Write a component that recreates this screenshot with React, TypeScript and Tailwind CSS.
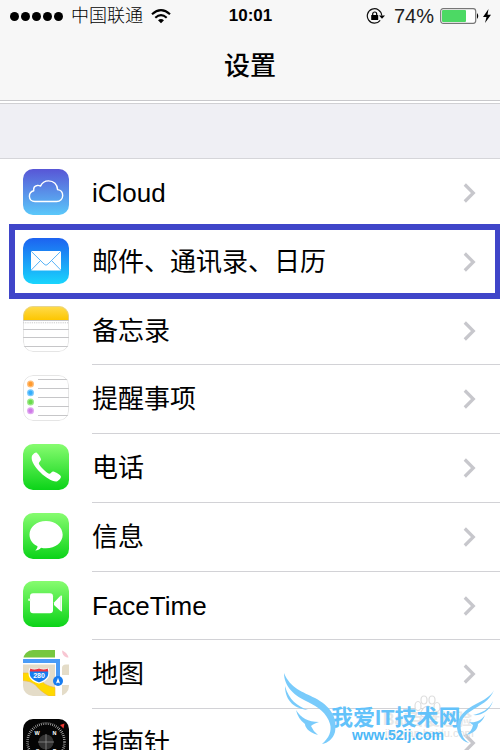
import type { ReactNode } from "react";

function Gradient({ id, from, to }: { id: string; from: string; to: string }) {
  return (
    <defs>
      <linearGradient id={id} x1="0" y1="0" x2="0" y2="1">
        <stop offset="0" stopColor={from} />
        <stop offset="1" stopColor={to} />
      </linearGradient>
    </defs>
  );
}

function Tile({ children }: { children: ReactNode }) {
  return (
    <svg viewBox="0 0 46 46" aria-hidden="true" className="mb-1 size-[46px] shrink-0 overflow-hidden rounded-[10px]">
      {children}
    </svg>
  );
}

function CloudIcon() {
  return (
    <Tile>
      <Gradient id="cloud" from="#5856d6" to="#5ac8fa" />
      <rect width="46" height="46" fill="url(#cloud)" />
      <path
        d="M12 32.500C8.500 32.500 6.400 30 6.400 27.200C6.400 24.400 8.200 22.300 10.700 21.700C10.400 18.700 12.200 16.800 14.200 16.500C15.600 16.200 16.700 16.700 17.500 17.100C19 13.700 22 11.900 25.600 11.900C30.700 11.900 34.300 15.500 34.600 20.600C37.700 21 39.700 23.500 39.700 26.500C39.700 29.900 37.200 32.500 33.700 32.500Z"
        fill="none"
        stroke="#fff"
        strokeWidth="1.400"
        strokeLinejoin="round"
      />
    </Tile>
  );
}

function MailIcon() {
  return (
    <Tile>
      <Gradient id="mail" from="#1d62f0" to="#19d5fd" />
      <rect width="46" height="46" fill="url(#mail)" />
      <rect x="8" y="13" width="30" height="19.500" rx="1" fill="#fff" />
      <path d="M8.300 13.400L21 26Q23 28.500 25 26L37.700 13.400M8.300 32L17.500 22.500M37.700 32L28.500 22.500" fill="none" stroke="#5ab4f7" strokeWidth="1" />
    </Tile>
  );
}

function NotesIcon() {
  return (
    <Tile>
      <Gradient id="notes" from="#ffdc4d" to="#fdc600" />
      <rect width="46" height="46" fill="#fff" />
      <rect width="46" height="14" fill="url(#notes)" />
      <path d="M0 14.500H46M0 23.500H46M0 31.500H46M0 40.500H46" stroke="#c6c6c8" strokeWidth="1" />
      <path d="M0 16.800H46" stroke="#c8c8c8" strokeWidth="1" strokeDasharray="1.200 1" />
      <rect x=".5" y=".5" width="45" height="45" rx="9.500" fill="none" stroke="#cfcfcf" strokeOpacity=".55" />
    </Tile>
  );
}

function RemindersIcon() {
  return (
    <Tile>
      <rect width="46" height="46" fill="#fff" />
      <path d="M15 4.500H46M15 13.500H46M15 22.500H46M15 31.500H46M15 40.500H46" stroke="#c6c6c8" strokeWidth="1" />
      {[
        [9, "#ff9a2e"],
        [17.700, "#35aefc"],
        [27, "#69dc4b"],
        [35.700, "#cf7be8"],
      ].map(([y, color]) => (
        <g key={y} fill={color as string}>
          <circle cx="7.500" cy={y} r="3.500" fillOpacity=".65" />
          <circle cx="7.500" cy={y} r="2.200" />
        </g>
      ))}
      <rect x=".5" y=".5" width="45" height="45" rx="9.500" fill="none" stroke="#cfcfcf" strokeOpacity=".55" />
    </Tile>
  );
}

function PhoneIcon() {
  return (
    <Tile>
      <Gradient id="phone" from="#87fc70" to="#0bd318" />
      <rect width="46" height="46" fill="url(#phone)" />
      <path
        d="M9.300 11.200C10.500 9.500 12 8.400 13.200 8.400C14.500 8.600 17.700 13.500 18 15.200C18.200 16.800 16 17.700 15.800 19.200C15.700 21.500 24.300 29.800 26.700 29.700C28.200 29.500 28.500 27.500 30.300 27.600C32.300 27.800 37.500 31 37.900 32.500C38.100 34.100 35.500 37 33.500 37.400C25.500 38 8 22 8.700 13.500C8.700 12.700 8.900 11.900 9.300 11.200Z"
        fill="#fff"
      />
    </Tile>
  );
}

function MessagesIcon() {
  return (
    <Tile>
      <Gradient id="messages" from="#87fc70" to="#0bd318" />
      <rect width="46" height="46" fill="url(#messages)" />
      <path
        d="M23 8C32.300 8 39.700 14 39.700 21.700C39.700 29.400 32.300 35.300 23 35.300C21.200 35.300 19.500 35.100 18 34.700C16.500 36.500 14.300 37.600 12.300 37.500C13.600 36.500 14.500 34.800 14.500 33.300C9.600 30.900 6.500 26.600 6.500 21.700C6.500 14 13.700 8 23 8Z"
        fill="#fff"
      />
    </Tile>
  );
}

function FaceTimeIcon() {
  return (
    <Tile>
      <Gradient id="facetime" from="#87fc70" to="#0bd318" />
      <rect width="46" height="46" fill="url(#facetime)" />
      <rect x="7" y="12.300" width="23" height="20" rx="3" fill="#fff" />
      <circle cx="6.300" cy="18.700" r="1.300" fill="#d6ffd0" />
      <path d="M31 21.500L37.500 14.800Q39 14 39 15.500V29.500Q39 31 37.500 30L31 24Z" fill="#fff" />
      <path d="M37.700 15V30" stroke="#b5f3ae" strokeWidth=".6" />
    </Tile>
  );
}

function MapsIcon() {
  return (
    <Tile>
      <rect width="46" height="46" fill="#fff" />
      <rect width="32" height="7.500" fill="#76c73f" />
      <path d="M39 0H46V7.500H44Q39 6 39 0Z" fill="#f8c6d2" />
      <rect y="14.500" width="32" height="32" fill="#e4dcc8" />
      <path d="M39 18Q39 14.500 43 14.500H46V25H39ZM39 35H46V46H39Z" fill="#e4dcc8" />
      <path d="M0 23H7Q14 27 19 31.500Q23 36 32 37.500V46H26Q18 42 12 34.500Q8 31 0 30.500Z" fill="#ffd900" stroke="#f3b73a" strokeWidth=".6" />
      <path d="M0 11H35V29" fill="none" stroke="#4a9cf7" strokeWidth="4" />
      <path d="M7 18.500Q11 20.300 16 18.500Q21 20.300 25 18.500Q29 29 16 33Q3 29 7 18.500Z" fill="#177cf0" stroke="#fff" strokeWidth="1.200" />
      <path d="M7.300 18.600Q11 20.300 16 18.600Q21 20.300 24.700 18.600L25.400 21.400H6.600Z" fill="#ed3340" />
      <text x="16" y="28" textAnchor="middle" fontSize="7" fontWeight="700" fill="#fff" fontFamily="Liberation Sans, sans-serif">
        280
      </text>
      <circle cx="35" cy="31" r="5" fill="#177cf0" />
      <path d="M35 27.800L37 33.500L35 32.500L33 33.500Z" fill="#fff" />
    </Tile>
  );
}

function CompassIcon() {
  return (
    <Tile>
      <rect width="46" height="46" fill="#050505" />
      <circle cx="23" cy="23" r="18.500" fill="none" stroke="#ddd" strokeWidth="2.600" strokeDasharray=".6 1.340" />
      <circle cx="23" cy="23" r="7.600" fill="#333" />
      <path d="M15 23H31M23 15V31" stroke="#999" strokeWidth=".7" />
      <path d="M37 6L41.500 4.500L40.500 9.500Z" fill="#f03a32" />
      <g fill="#fff" fontSize="5.500" fontWeight="700" fontFamily="Liberation Sans, sans-serif" textAnchor="middle">
        <text x="14" y="15.500">W</text>
        <text x="31.500" y="15.500">N</text>
        <text x="14.500" y="34">S</text>
        <text x="31.500" y="34">E</text>
      </g>
    </Tile>
  );
}

const items = [
  { label: "iCloud", icon: <CloudIcon /> },
  { label: "邮件、通讯录、日历", icon: <MailIcon />, highlighted: true },
  { label: "备忘录", icon: <NotesIcon /> },
  { label: "提醒事项", icon: <RemindersIcon /> },
  { label: "电话", icon: <PhoneIcon /> },
  { label: "信息", icon: <MessagesIcon /> },
  { label: "FaceTime", icon: <FaceTimeIcon /> },
  { label: "地图", icon: <MapsIcon /> },
  { label: "指南针", icon: <CompassIcon /> },
];

function StatusBar() {
  return (
    <div className="grid h-8 grid-cols-[1fr_auto_1fr] items-center pr-[9px] pl-2.5">
      <div className="flex items-center">
        <div className="flex gap-0.5">
          {[0, 1, 2, 3, 4].map((n) => (
            <span key={n} className="size-[9px] rounded-full bg-black" />
          ))}
        </div>
        <span className="ml-2 text-lg font-light">中国联通</span>
        <svg viewBox="0 0 20 15" className="ml-2 h-[15px] w-5" aria-label="Wi-Fi">
          <g fill="none" stroke="#000" strokeWidth="2.100">
            <path d="M1 5.200Q10 -2.800 19 5.200" />
            <path d="M4.300 8.800Q10 3.600 15.700 8.800" />
          </g>
          <path d="M7 11.300Q10 8.800 13 11.300L10 14.300Z" />
        </svg>
      </div>
      <time className="text-[17px] font-bold">10:01</time>
      <div className="flex items-center justify-end">
        <svg viewBox="0 0 20 16" className="h-4 w-5" aria-label="Rotation lock">
          <path d="M14.200 12.300A7.200 7.200 0 1 1 15.700 7.500" fill="none" stroke="#111" strokeWidth="1.200" />
          <path d="M13 7.500H19L16 10.800Z" />
          <rect x="5.200" y="7" width="7" height="5" rx=".5" />
          <path d="M6.700 7.500V6A2 2 0 0 1 10.700 6V7.500" fill="none" stroke="#000" strokeWidth="1.200" />
        </svg>
        <span className="ml-2 text-xl text-[#222]">74%</span>
        <svg viewBox="0 0 40 16" className="ml-1.5 h-4 w-10" aria-label="Battery">
          <rect x=".7" y=".7" width="35" height="14.600" rx="2.500" fill="#fff" stroke="#777" strokeWidth="1.200" />
          <rect x="2" y="2" width="24" height="12" rx="1" fill="#4cd964" />
          <path d="M37 5Q39.500 8 37 11Z" />
        </svg>
        <svg viewBox="0 0 8 14" className="ml-[3px] h-3.5 w-2" aria-label="Charging">
          <path d="M5.500 0L0 8H3.500L2 14L8 5.700H4.500Z" />
        </svg>
      </div>
    </div>
  );
}

function Watermark() {
  return (
    <div className="pointer-events-none absolute right-0 bottom-0 h-[90px] w-[230px] text-[#4db8f7]">
      <svg viewBox="0 0 230 90" className="absolute inset-0 size-full" aria-hidden="true">
        <g fill="#fff" stroke="#dedede" strokeWidth="1.200">
          <ellipse cx="148" cy="46" rx="3" ry="4.500" />
          <ellipse cx="154" cy="40" rx="3" ry="4" />
          <ellipse cx="162" cy="40" rx="3" ry="4" />
          <ellipse cx="167" cy="47" rx="3" ry="4.500" />
          <path d="M158 46Q162 47 164 52Q166 58 158 57Q149 58 151 52Q154 46 158 46Z" />
        </g>
      </svg>
      <span className="absolute top-[50px] left-[113px] text-base leading-5 font-bold whitespace-nowrap text-[#e8e8e8]">Bai百度经验</span>
      <span className="absolute top-[65px] left-[115px] text-[11px] leading-4 whitespace-nowrap text-[#e2e2e2]">jingyan.baidu.com</span>
      <strong className="absolute top-[44px] left-[61px] text-[22px] leading-7 font-bold whitespace-nowrap text-[#62c2fa]">我爱IT技术网</strong>
      <span className="absolute top-[67px] left-[82px] text-sm leading-4 font-bold whitespace-nowrap">www.52ij.com</span>
      <svg viewBox="0 0 230 90" className="absolute inset-0 size-full" aria-hidden="true">
        <g fill="#79cbfb">
          <path d="M14 13C20 28 33 32 45 38C60 46 68 57 65 72C63 79 58 83 52 84C59 78 62 71 60 64C57 53 48 47 38 42C25 36 14 27 14 13Z" />
          <path d="M15 26C19 40 27 46 38 50C26 49 15 42 15 26Z" />
          <path d="M26 50C31 58 38 62 49 62Q43 64 41 66Q43 71 48 75C37 72 35 66 35 64Q28 59 26 50Z" />
          <path d="M224 30C220 41 210 45 201 51C191 57 188 65 193 77C196 81 198 83 201 83C194 83 188 77 187 68C187 56 196 49 206 44C214 40 221 36 224 30Z" />
          <path d="M223 41C219 50 211 53 203 55C211 56 220 51 223 41Z" />
          <path d="M215 55C211 61 205 63 199 62L203 65Q202 71 196 75C204 73 208 69 208 64Q213 61 215 55Z" />
        </g>
      </svg>
    </div>
  );
}

export default function App() {
  return (
    <div className="relative h-screen overflow-hidden bg-[#efeff4] font-['Liberation_Sans','Noto_Sans_CJK_SC',sans-serif] text-black">
      <header className="h-[101px] border-b border-[#c8c8cb] bg-[#f7f7f7]">
        <StatusBar />
        <h1 className="pt-4 text-center text-[26px] leading-9 font-medium">设置</h1>
      </header>
      <div className="h-[58px] border-t-2 border-b border-t-white border-b-[#d5d5d9]">
        <div className="border-t border-[#d0d0d3]" />
      </div>
      <nav className="bg-white">
        {items.map(({ label, icon, highlighted }) => (
          <a key={label} href="#" className="relative flex h-[69px] items-center pl-[23px] nth-[4n+3]:h-[68px]">
            {icon}
            <span className="ml-[23px] flex h-full flex-1 items-center justify-between border-b border-[#d2d2d6] pr-6">
              <span className="text-[26px] leading-9">{label}</span>
              <svg viewBox="0 0 13 20" className="h-5 w-[13px]" aria-hidden="true">
                <path d="M1.800 1.500L10.300 10L1.800 18.500" fill="none" stroke="#c7c7cc" strokeWidth="3.200" />
              </svg>
            </span>
            {highlighted && <span className="absolute -top-1 right-0 -bottom-0.5 left-[9px] z-10 border-6 border-r-5 border-[#3f45c9]" />}
          </a>
        ))}
      </nav>
      <Watermark />
    </div>
  );
}
